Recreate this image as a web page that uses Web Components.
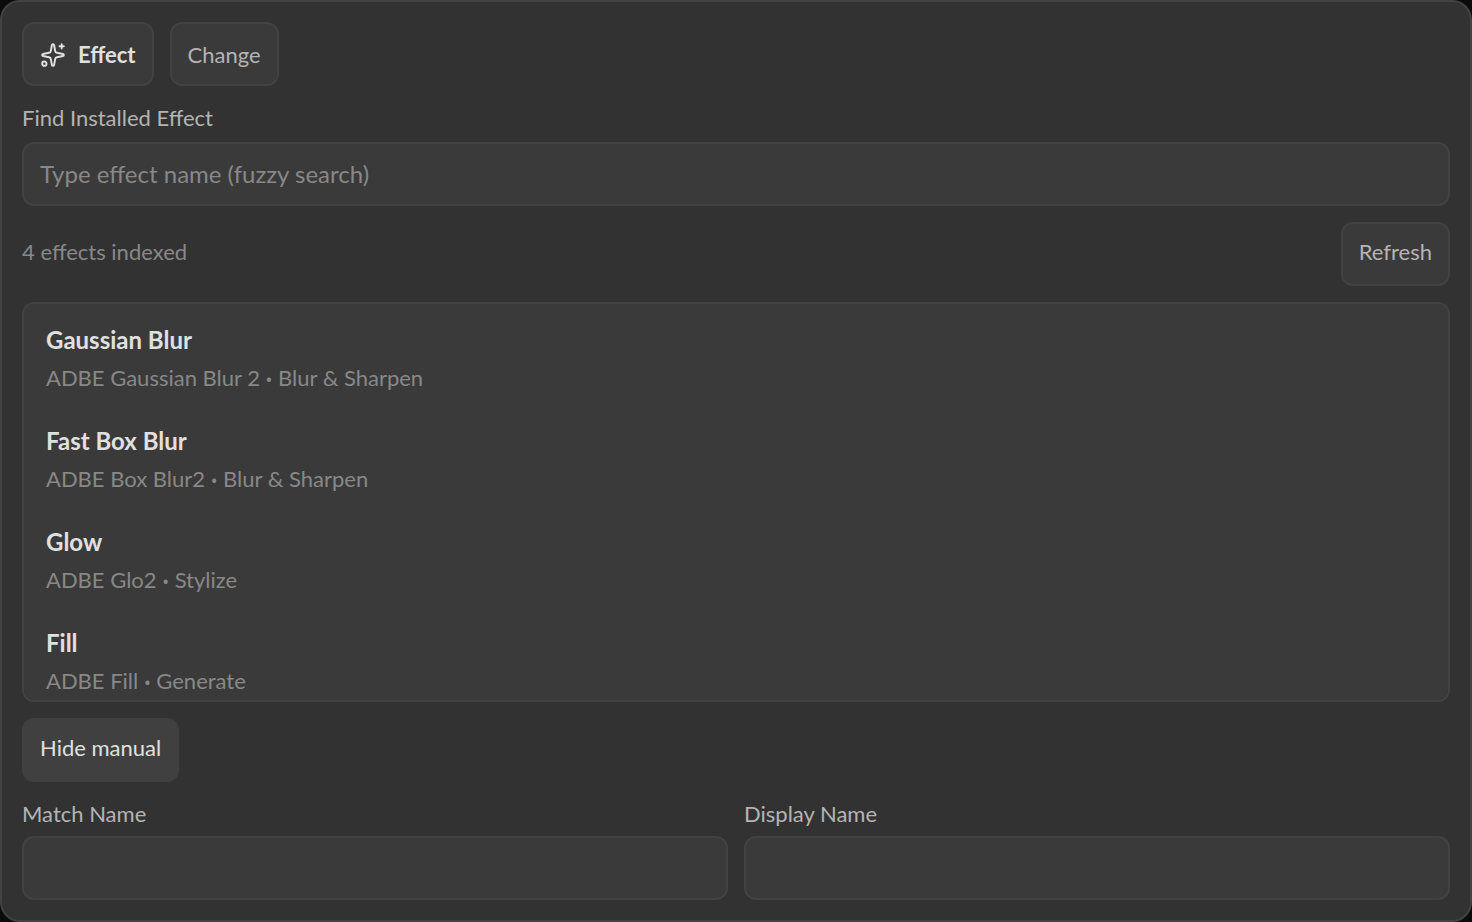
<!DOCTYPE html>
<html lang="en">
<head>
<meta charset="utf-8">
<title>Effect</title>
<style>
  :root {
    --panel: #323232;
    --field: #3a3a3a;
    --line: #424242;
    --raised: #404040;
    --text: #e0e0e0;
    --label: #b4b4b4;
    --muted: #888888;
  }
  body {
    margin: 0;
    background: #0c0c0c;
    color: var(--label);
    font: 22px/32px Lato, "Noto Sans", sans-serif;
  }
  .tabs, .status { display: flex; gap: 16px; align-items: center; }
  .tabs { --button-padding: 2px 16px 0; }
  .status { justify-content: space-between; color: var(--muted); }
  .status span { padding-bottom: 4px; }
  .manual { display: grid; grid-template-columns: 1fr 1fr; gap: 16px; }
</style>
</head>
<body>
<effect-panel>
  <div class="tabs">
    <panel-button variant="active"><sparkle-icon slot="icon"></sparkle-icon>Effect</panel-button>
    <panel-button>Change</panel-button>
  </div>
  <text-field label="Find Installed Effect" placeholder="Type effect name (fuzzy search)" style="--label-gap: 8px"></text-field>
  <div class="status">
    <span>4 effects indexed</span>
    <panel-button>Refresh</panel-button>
  </div>
  <effect-list></effect-list>
  <div><panel-button variant="raised">Hide manual</panel-button></div>
  <div class="manual">
    <text-field label="Match Name"></text-field>
    <text-field label="Display Name"></text-field>
  </div>
</effect-panel>

<script>
class EffectPanel extends HTMLElement {
  constructor() {
    super();
    this.attachShadow({ mode: 'open' });
    this.shadowRoot.innerHTML = `
      <style>
        :host {
          display: flex; flex-direction: column; gap: 16px;
          box-sizing: border-box; min-height: 100vh; padding: 20px;
          background: var(--panel); border: 2px solid var(--line); border-radius: 20px;
        }
      </style>
      <slot></slot>
    `;
  }
}

class PanelButton extends HTMLElement {
  constructor() {
    super();
    this.attachShadow({ mode: 'open' });
    this.shadowRoot.innerHTML = `
      <style>
        :host { display: inline-block; vertical-align: top; }
        button {
          display: flex; align-items: center; gap: 12px;
          box-sizing: border-box; height: 64px; padding: var(--button-padding, 0 16px 4px);
          background: var(--field); border: 2px solid var(--line); border-radius: 12px;
          color: var(--label); font: inherit; white-space: nowrap; cursor: pointer;
        }
        :host([variant="active"]) button { color: var(--text); font-weight: bold; }
        :host([variant="raised"]) button { color: var(--text); background: var(--raised); border-color: var(--raised); }
      </style>
      <button type="button"><slot name="icon"></slot><span><slot></slot></span></button>
    `;
  }
}

class SparkleIcon extends HTMLElement {
  constructor() {
    super();
    this.attachShadow({ mode: 'open' });
    this.shadowRoot.innerHTML = `
      <style>
        :host { display: block; width: 26px; height: 26px; }
        svg { display: block; }
      </style>
      <svg width="26" height="26" viewBox="0 0 24 24" fill="none" stroke="currentColor" stroke-width="1.8" stroke-linecap="round" stroke-linejoin="round" aria-hidden="true">
        <path d="M11.017 2.814a1 1 0 0 1 1.966 0l1.051 5.558a2 2 0 0 0 1.594 1.594l5.558 1.051a1 1 0 0 1 0 1.966l-5.558 1.051a2 2 0 0 0-1.594 1.594l-1.051 5.558a1 1 0 0 1-1.966 0l-1.051-5.558a2 2 0 0 0-1.594-1.594l-5.558-1.051a1 1 0 0 1 0-1.966l5.558-1.051a2 2 0 0 0 1.594-1.594z"/>
        <path d="M20 2v4M22 4h-4"/>
        <circle cx="4" cy="20" r="2"/>
      </svg>
    `;
  }
}

class TextField extends HTMLElement {
  constructor() {
    super();
    this.attachShadow({ mode: 'open' });
  }

  connectedCallback() {
    this.shadowRoot.innerHTML = `
      <style>
        :host { display: flex; flex-direction: column; gap: var(--label-gap, 6px); min-width: 0; }
        input {
          box-sizing: border-box; width: 100%; height: 64px; padding: 0 16px 2px;
          background: var(--field); border: 2px solid var(--line); border-radius: 12px;
          color: var(--text); font: inherit; font-size: 24px; outline: none;
        }
        input::placeholder { color: var(--muted); opacity: 1; }
      </style>
      <label for="field">${this.getAttribute('label')}</label>
      <input id="field" type="text" placeholder="${this.getAttribute('placeholder') || ''}">
    `;
  }
}

const EFFECTS = [
  { name: 'Gaussian Blur', matchName: 'ADBE Gaussian Blur 2', category: 'Blur &amp; Sharpen' },
  { name: 'Fast Box Blur', matchName: 'ADBE Box Blur2', category: 'Blur &amp; Sharpen' },
  { name: 'Glow', matchName: 'ADBE Glo2', category: 'Stylize' },
  { name: 'Fill', matchName: 'ADBE Fill', category: 'Generate' }
];

class EffectList extends HTMLElement {
  constructor() {
    super();
    this.attachShadow({ mode: 'open' });
  }

  connectedCallback() {
    this.shadowRoot.innerHTML = `
      <style>
        :host {
          display: block; box-sizing: border-box; height: 400px; overflow-y: auto; scrollbar-width: none;
          background: var(--field); border: 2px solid var(--line); border-radius: 12px;
        }
        ul { display: flex; flex-direction: column; gap: 7px; list-style: none; margin: 0; padding: 8px; }
        button {
          display: flex; flex-direction: column; gap: 6px; width: 100%; padding: 12px 14px;
          background: none; border: 0; border-radius: 8px; font: inherit; text-align: left; cursor: pointer;
        }
        .name { color: var(--text); font-size: 24px; font-weight: bold; }
        .meta { color: var(--muted); }
        .dot { font-family: "Noto Sans", sans-serif; font-size: 18px; line-height: 1; }
      </style>
      <ul>
        ${EFFECTS.map(e => `
          <li><button type="button">
            <span class="name">${e.name}</span>
            <span class="meta">${e.matchName} <span class="dot">•</span> ${e.category}</span>
          </button></li>`).join('')}
      </ul>
    `;
  }
}

customElements.define('effect-panel', EffectPanel);
customElements.define('panel-button', PanelButton);
customElements.define('sparkle-icon', SparkleIcon);
customElements.define('text-field', TextField);
customElements.define('effect-list', EffectList);
</script>
</body>
</html>
